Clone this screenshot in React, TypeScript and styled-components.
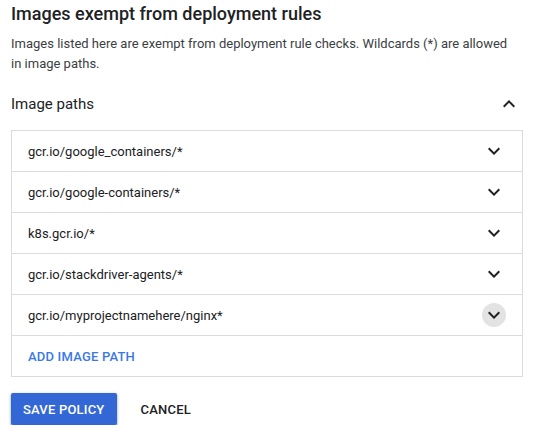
import React from "react";
import styled, { createGlobalStyle } from "styled-components";

const GlobalStyle = createGlobalStyle`
  body {
    margin: 0;
    background: #fff;
    font-family: Roboto, "Liberation Sans", Arial, sans-serif;
    color: #202124;
  }
`;

const Page = styled.div`
  width: 512px;
  padding: 0 11px;
`;

const Title = styled.h2`
  margin: 0;
  font-size: 18px;
  line-height: 28px;
  font-weight: 500;
  color: #202124;
`;

const Description = styled.p`
  max-width: 500px;
  margin: 6px 0 0;
  font-size: 13px;
  line-height: 20px;
  color: #3c4043;
`;

const SectionHeader = styled.div`
  display: flex;
  align-items: center;
  justify-content: space-between;
  height: 24px;
  margin: 18px 0 14px;
  padding-right: 2px;
  font-size: 15px;
  line-height: 24px;
  color: #202124;
`;

const PathList = styled.div`
  border: 1px solid #dadce0;
`;

const Row = styled.div`
  display: flex;
  align-items: center;
  justify-content: space-between;
  height: 40px;
  padding: 0 16px;
  font-size: 13px;
  color: #202124;
  & + & {
    border-top: 1px solid #dadce0;
  }
`;

const IconButton = styled.span<{ $hover?: boolean }>`
  display: flex;
  align-items: center;
  justify-content: center;
  width: 24px;
  height: 24px;
  border-radius: 50%;
  background: ${(p) => (p.$hover ? "#e3e3e3" : "transparent")};
`;

const TextLink = styled.span`
  font-size: 13px;
  font-weight: 500;
  letter-spacing: 0.2px;
  color: #3b78e7;
  text-transform: uppercase;
`;

const Actions = styled.div`
  display: flex;
  align-items: center;
  gap: 12px;
  margin-top: 16px;
`;

const Button = styled.button<{ $primary?: boolean }>`
  height: 32px;
  padding: 0 12px;
  border: none;
  border-radius: 2px;
  font-family: Roboto, "Liberation Sans", Arial, sans-serif;
  font-size: 13px;
  font-weight: 500;
  letter-spacing: 0.2px;
  text-transform: uppercase;
  cursor: pointer;
  background: ${(p) => (p.$primary ? "#3367d6" : "transparent")};
  color: ${(p) => (p.$primary ? "#fff" : "#202124")};
  box-shadow: ${(p) =>
    p.$primary ? "0 1px 2px rgba(0,0,0,0.3), 0 1px 3px 1px rgba(0,0,0,0.12)" : "none"};
`;

const ChevronDown = () => (
  <svg width="24" height="24" viewBox="0 0 24 24">
    <path d="M16.59 8.59L12 13.17 7.41 8.59 6 10l6 6 6-6z" fill="#202124" />
  </svg>
);

const ChevronUp = () => (
  <svg width="24" height="24" viewBox="0 0 24 24">
    <path d="M12 8l-6 6 1.41 1.41L12 10.83l4.59 4.58L18 14z" fill="#202124" />
  </svg>
);

const paths = [
  "gcr.io/google_containers/*",
  "gcr.io/google-containers/*",
  "k8s.gcr.io/*",
  "gcr.io/stackdriver-agents/*",
  "gcr.io/myprojectnamehere/nginx*",
];

export default function App() {
  return (
    <Page>
      <GlobalStyle />
      <Title>Images exempt from deployment rules</Title>
      <Description>
        Images listed here are exempt from deployment rule checks. Wildcards (*) are allowed
        in image paths.
      </Description>
      <SectionHeader>
        <span>Image paths</span>
        <ChevronUp />
      </SectionHeader>
      <PathList>
        {paths.map((p, i) => (
          <Row key={p}>
            <span>{p}</span>
            <IconButton $hover={i === paths.length - 1}>
              <ChevronDown />
            </IconButton>
          </Row>
        ))}
        <Row>
          <TextLink>Add image path</TextLink>
        </Row>
      </PathList>
      <Actions>
        <Button $primary>Save policy</Button>
        <Button>Cancel</Button>
      </Actions>
    </Page>
  );
}
